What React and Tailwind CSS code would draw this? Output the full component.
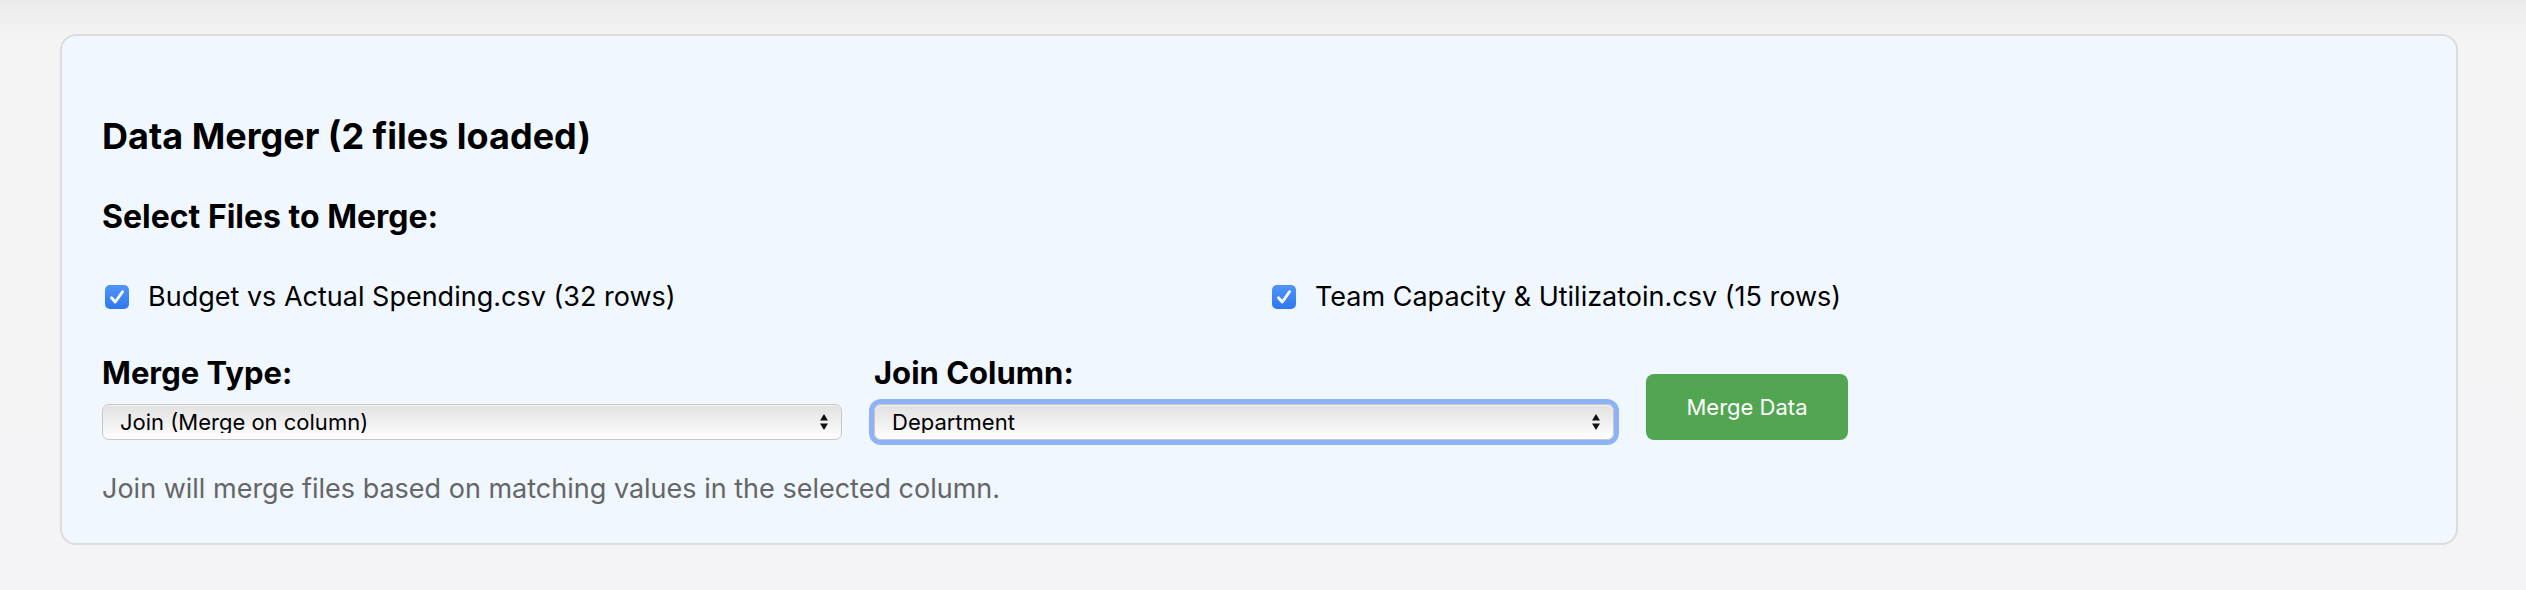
import React, { useState } from "react";

const files = [
  { name: "Budget vs Actual Spending.csv", rows: 32 },
  { name: "Team Capacity & Utilizatoin.csv", rows: 15 },
];

const Check = () => (
  <span className="flex h-[24px] w-[24px] shrink-0 items-center justify-center rounded-[5px] bg-gradient-to-b from-[#4f95f8] to-[#2f77ef]">
    <svg viewBox="0 0 16 16" className="h-[20px] w-[20px]" fill="none">
      <path
        d="M3.6 8.6 L6.6 12 L12.4 3.8"
        stroke="white"
        strokeWidth="2.3"
        strokeLinecap="round"
        strokeLinejoin="round"
      />
    </svg>
  </span>
);

const Arrows = () => (
  <svg
    viewBox="0 0 10 18"
    className="pointer-events-none absolute right-[13px] top-1/2 h-[18px] w-[10px] -translate-y-1/2"
  >
    <path d="M5 1 L9 7.5 L1 7.5 Z" fill="#111" />
    <path d="M5 17 L9 10.5 L1 10.5 Z" fill="#111" />
  </svg>
);

const Select = ({ value, focused }) => (
  <div
    className={
      "relative h-[36px] w-full rounded-[7px] " +
      (focused ? "ring-[5px] ring-[#8db2f6]" : "")
    }
  >
    <select
      defaultValue={value}
      className="h-full w-full appearance-none rounded-[7px] border border-[#c6c6c6] bg-gradient-to-b from-[#e2e2e2] via-[#efefef] to-white pl-[17px] text-[22px] leading-none text-black shadow-[inset_0_1px_0_rgba(255,255,255,0.6)] outline-none"
    >
      <option>{value}</option>
    </select>
    <Arrows />
  </div>
);

export default function App() {
  const [merging, setMerging] = useState(false);

  return (
    <div
      className="h-[590px] overflow-hidden bg-[linear-gradient(to_bottom,#ebebeb_0px,#f4f4f5_40px,#f4f4f6_100%)] pl-[60px] pr-[68px] pt-[34px]"
      style={{ fontFamily: "Inter, 'Noto Sans', sans-serif" }}
    >
      <div className="h-[511px] rounded-[16px] border-2 border-[#dcdcdc] bg-[#f0f7fe] px-[40px] pt-[40px]">
        {/* Header */}
        <h3 className="mt-[42px] text-[36px] font-bold leading-none text-black">
          Data Merger (2 files loaded)
        </h3>
        <h4 className="mt-[47px] text-[32px] font-bold leading-none text-black">
          Select Files to Merge:
        </h4>

        {/* File checkboxes */}
        <div className="mt-[50px] grid grid-cols-2 gap-[20px]">
          {files.map((f) => (
            <label key={f.name} className="flex items-center gap-[19px] pl-[3px]">
              <Check />
              <span className="text-[27px] leading-none text-black">
                {f.name} ({f.rows} rows)
              </span>
            </label>
          ))}
        </div>

        {/* Merge options */}
        <div className="mt-[47px] flex items-end gap-[32px]">
          <div className="w-[740px]">
            <div className="mb-[16px] text-[31px] font-bold leading-none text-black">
              Merge Type:
            </div>
            <Select value="Join (Merge on column)" />
          </div>
          <div className="w-[740px]">
            <div className="mb-[16px] text-[31px] font-bold leading-none text-black">
              Join Column:
            </div>
            <Select value="Department" focused />
          </div>
          <button
            onClick={() => setMerging(!merging)}
            className="h-[66px] w-[202px] rounded-[8px] bg-[#52a652] text-[22px] text-white"
          >
            Merge Data
          </button>
        </div>

        <p className="mt-[35px] text-[27px] leading-none text-[#666]">
          Join will merge files based on matching values in the selected column.
        </p>
      </div>
    </div>
  );
}
